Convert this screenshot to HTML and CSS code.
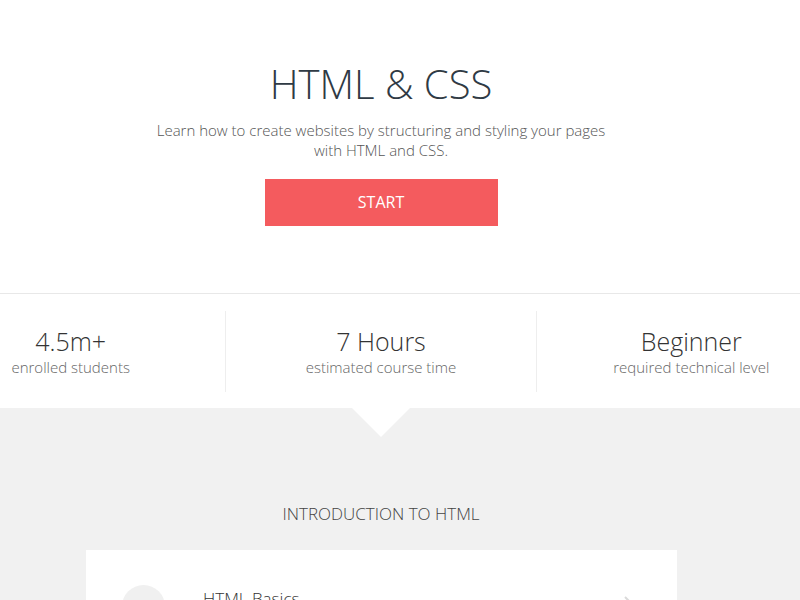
FILE: index.html
```html
<!DOCTYPE html>
<html lang="en">
<head>
<meta charset="utf-8">
<title>HTML &amp; CSS</title>
<link rel="stylesheet" href="styles.css">
</head>
<body>
<header class="hero">
  <div class="container">
    <h1 class="hero-title">HTML &amp; CSS</h1>
    <p class="hero-lead">Learn how to create websites by structuring and styling your pages<br>with HTML and CSS.</p>
    <a class="btn-start" href="#">START</a>
  </div>
</header>
<section class="stats">
  <div class="stats-row">
    <div class="stat">
      <div class="stat-value">4.5m+</div>
      <div class="stat-label">enrolled students</div>
    </div>
    <div class="stat">
      <div class="stat-value">7 Hours</div>
      <div class="stat-label">estimated course time</div>
    </div>
    <div class="stat">
      <div class="stat-value">Beginner</div>
      <div class="stat-label">required technical level</div>
    </div>
  </div>
</section>
<section class="syllabus">
  <div class="container">
    <h2 class="unit-title">INTRODUCTION TO HTML</h2>
    <div class="lesson-card">
      <div class="lesson-row">
        <span class="lesson-icon"></span>
        <span class="lesson-name">HTML Basics</span>
        <svg class="lesson-chevron" width="12" height="20" viewBox="0 0 12 20"><path d="M2 2l8 8-8 8" fill="none" stroke="#dadada" stroke-width="2"/></svg>
      </div>
    </div>
  </div>
</section>
</body>
</html>
```

FILE: styles.css
```css
* { box-sizing: border-box; }
html, body { margin: 0; padding: 0; }
body {
  font-family: "Open Sans", "Liberation Sans", sans-serif;
  font-weight: 300;
  background: #fff;
  color: #333;
  overflow: hidden;
}
.container {
  width: 762px;
  text-align: center;
}
.hero {
  padding-top: 56px;
  padding-bottom: 67px;
  border-bottom: 1px solid #e8e8e8;
}
.hero-title {
  margin: 0;
  font-size: 40px;
  font-weight: 300;
  line-height: 56px;
  color: #2f3a44;
}
.hero-lead {
  margin: 8px 0 0;
  font-size: 15px;
  line-height: 20px;
  color: #555;
}
.btn-start {
  display: inline-block;
  margin-top: 19px;
  width: 233px;
  height: 47px;
  line-height: 47px;
  background: #f45b5e;
  color: #fff;
  font-size: 16px;
  font-weight: 400;
  text-decoration: none;
}
.stats {
  padding: 17px 0 16px;
}
.stats-row {
  display: flex;
  width: 930px;
  margin-left: -84px;
}
.stat {
  flex: 1;
  text-align: center;
  padding: 15px 0 0;
  height: 81px;
}
.stat + .stat {
  border-left: 1px solid #eeeeee;
}
.stat-value {
  font-size: 25px;
  line-height: 30px;
  color: #333;
}
.stat-label {
  margin-top: 1px;
  font-size: 15px;
  line-height: 20px;
  color: #666;
}
.syllabus {
  position: relative;
  background: #f1f1f1;
  padding-top: 93px;
  height: 200px;
}
.syllabus::before {
  content: "";
  position: absolute;
  top: 0;
  left: 352px;
  border-left: 29px solid transparent;
  border-right: 29px solid transparent;
  border-top: 29px solid #fff;
}
.unit-title {
  margin: 0;
  font-size: 17px;
  font-weight: 300;
  line-height: 26px;
  color: #444;
}
.lesson-card {
  margin: 23px 0 0 86px;
  width: 591px;
  background: #fff;
  padding: 35px 36px;
  text-align: left;
}
.lesson-row {
  display: flex;
  align-items: flex-start;
}
.lesson-icon {
  width: 43px;
  height: 43px;
  border-radius: 50%;
  background: #f0f0f0;
  flex: none;
}
.lesson-name {
  margin: 2px 0 0 38px;
  font-size: 17px;
  line-height: 24px;
  color: #333;
  flex: 1;
}
.lesson-chevron {
  margin: 10px 6px 0 0;
}
```
